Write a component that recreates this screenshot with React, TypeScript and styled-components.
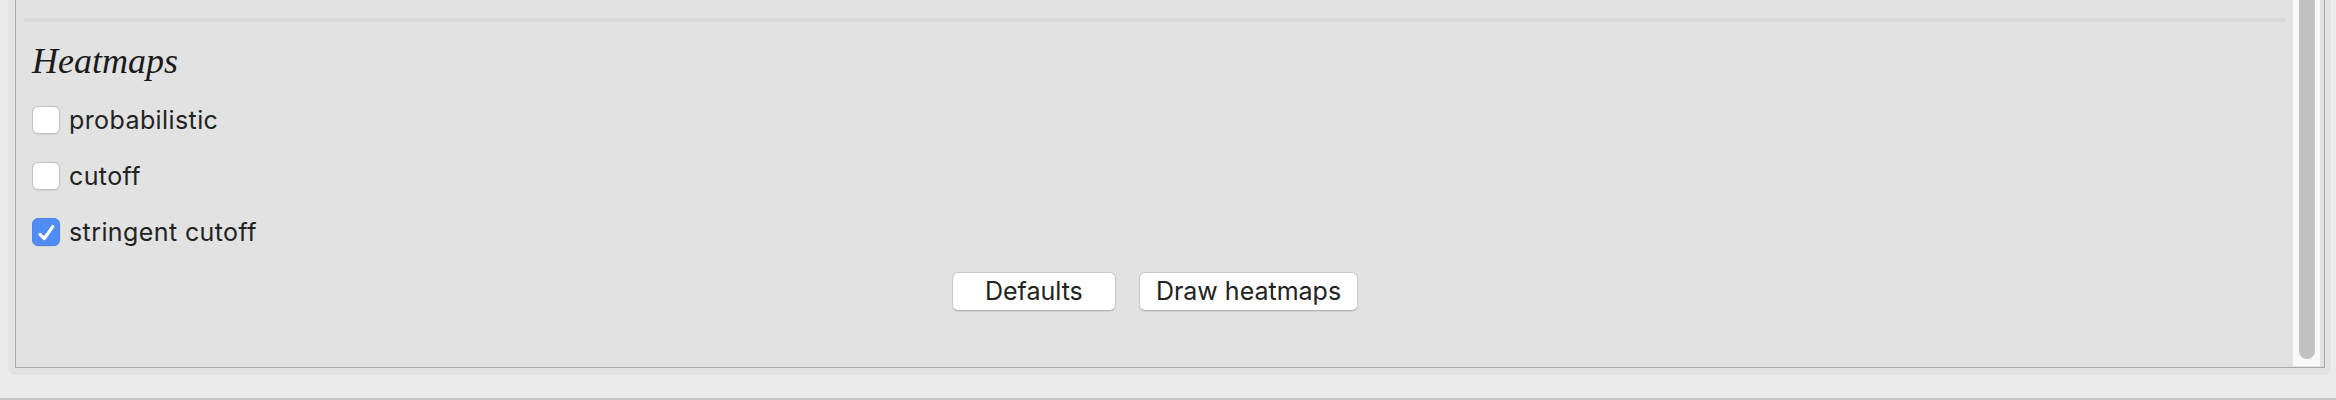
import React, { useState } from "react";
import styled, { createGlobalStyle } from "styled-components";

const GlobalStyle = createGlobalStyle`
  html, body {
    margin: 0;
    padding: 0;
    background: #ececec;
  }
  body {
    width: 2336px;
    height: 400px;
    overflow: hidden;
    font-family: Inter, "Liberation Sans", sans-serif;
  }
`;

const Page = styled.div`
  width: 2336px;
  height: 400px;
  display: flex;
  flex-direction: column;
  background: #ececec;
  box-sizing: border-box;
  border-bottom: 2px solid #c6c6c6;
  padding-bottom: 2px;
`;

const Frame = styled.div`
  margin-left: 8px;
  width: 2323px;
  height: 375px;
  box-sizing: border-box;
  padding: 0 6px 7px 7px;
  background: #e3e3e3;
  border-radius: 0 0 7px 7px;
  display: flex;
`;

const Panel = styled.div`
  flex: 1;
  display: flex;
  background: #e2e2e2;
  border: 1px solid #a8a8a8;
  border-top: none;
  box-sizing: border-box;
`;

const Content = styled.div`
  flex: 1;
  display: flex;
  flex-direction: column;
  padding: 18px 7px 0 8px;
  min-width: 0;
`;

const Separator = styled.div`
  height: 4px;
  background: #d9d9d9;
`;

const Heading = styled.h2`
  margin: 19px 0 0 8px;
  font-family: "Liberation Serif", "Times New Roman", serif;
  font-style: italic;
  font-weight: normal;
  font-size: 36px;
  line-height: 40px;
  color: #1a1a1a;
`;

const Options = styled.div`
  display: flex;
  flex-direction: column;
  gap: 28px;
  margin: 25px 0 0 8px;
`;

const OptionRow = styled.label`
  display: flex;
  align-items: center;
  gap: 9px;
  height: 28px;
  font-size: 25px;
  letter-spacing: 0.4px;
  line-height: 28px;
  color: #222;
  cursor: default;
`;

const Box = styled.span<{ $checked: boolean }>`
  width: 28px;
  height: 28px;
  box-sizing: border-box;
  border-radius: 6px;
  display: flex;
  align-items: center;
  justify-content: center;
  background: ${(p) => (p.$checked ? "#4f8cf6" : "#ffffff")};
  border: 1px solid ${(p) => (p.$checked ? "#4a86ee" : "#c3c3c3")};
  box-shadow: 0 0.5px 1px rgba(0, 0, 0, 0.08);
  flex-shrink: 0;
`;

const HiddenInput = styled.input`
  position: absolute;
  opacity: 0;
  width: 0;
  height: 0;
  margin: 0;
`;

const ButtonBar = styled.div`
  display: flex;
  justify-content: center;
  gap: 23px;
  margin-top: 26px;
`;

const Button = styled.button`
  height: 39px;
  min-width: 164px;
  padding: 0 16px;
  box-sizing: border-box;
  background: #ffffff;
  border: 1px solid #c9c9c9;
  border-bottom-color: #b5b5b5;
  border-radius: 6px;
  box-shadow: 0 1px 1px rgba(0, 0, 0, 0.08);
  font-family: Inter, "Liberation Sans", sans-serif;
  font-size: 25px;
  color: #222;
  line-height: 37px;
`;

const ScrollTrack = styled.div`
  width: 27px;
  margin-right: 4px;
  margin-bottom: 1px;
  background: #f8f8f8;
  display: flex;
  justify-content: center;
  padding: 0 0 7px 0;
  box-sizing: border-box;
`;

const ScrollThumb = styled.div`
  width: 16px;
  height: 100%;
  background: #c1c1c1;
  border-radius: 0 0 8px 8px;
`;

const CheckIcon = () => (
  <svg width="28" height="28" viewBox="0 0 28 28">
    <path
      d="M7.5 16.5 L12.2 21 L21.5 8"
      fill="none"
      stroke="#ffffff"
      strokeWidth="3.4"
      strokeLinecap="round"
      strokeLinejoin="round"
    />
  </svg>
);

const Option = ({
  label,
  checked,
  onToggle,
}: {
  label: string;
  checked: boolean;
  onToggle: () => void;
}) => (
  <OptionRow>
    <HiddenInput type="checkbox" checked={checked} onChange={onToggle} />
    <Box $checked={checked}>{checked && <CheckIcon />}</Box>
    {label}
  </OptionRow>
);

export default function App() {
  const [opts, setOpts] = useState({
    probabilistic: false,
    cutoff: false,
    stringent: true,
  });
  const toggle = (k: keyof typeof opts) => () =>
    setOpts((o) => ({ ...o, [k]: !o[k] }));

  return (
    <>
      <GlobalStyle />
      <Page>
        <Frame>
          <Panel>
            <Content>
              <Separator />
              <Heading>Heatmaps</Heading>
              <Options>
                <Option label="probabilistic" checked={opts.probabilistic} onToggle={toggle("probabilistic")} />
                <Option label="cutoff" checked={opts.cutoff} onToggle={toggle("cutoff")} />
                <Option label="stringent cutoff" checked={opts.stringent} onToggle={toggle("stringent")} />
              </Options>
              <ButtonBar>
                <Button>Defaults</Button>
                <Button>Draw heatmaps</Button>
              </ButtonBar>
            </Content>
            <ScrollTrack>
              <ScrollThumb />
            </ScrollTrack>
          </Panel>
        </Frame>
      </Page>
    </>
  );
}
